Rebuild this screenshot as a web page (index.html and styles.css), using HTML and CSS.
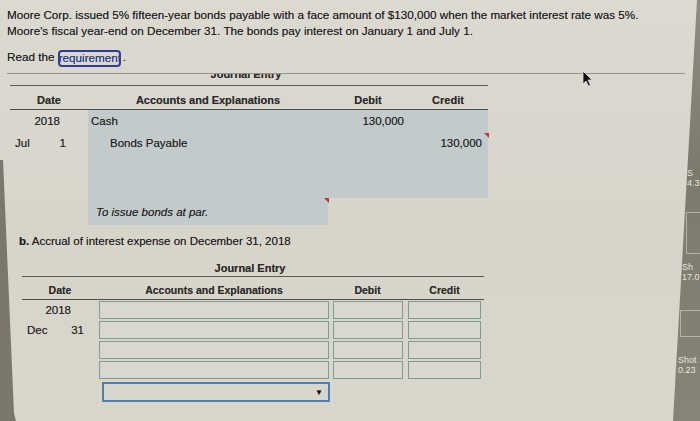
FILE: index.html
```html
<!DOCTYPE html>
<html>
<head>
<meta charset="utf-8">
<link rel="stylesheet" href="styles.css">
</head>
<body>
<div class="page">
  <p class="q">Moore Corp. issued 5% fifteen-year bonds payable with a face amount of $130,000 when the market interest rate was 5%.<br>Moore's fiscal year-end on December 31. The bonds pay interest on January 1 and July 1.</p>
  <p class="read">Read the <span class="req">requirements</span>.</p>
  <div class="rule"></div>

  <section class="je je-a">
    <div class="title-clip"><div class="title">Journal Entry</div></div>
    <div class="row head">
      <div>Date</div><div>Accounts and Explanations</div><div>Debit</div><div>Credit</div>
    </div>
    <div class="row">
      <div class="date"><span></span><span class="year">2018</span></div>
      <div class="acct shade">Cash</div>
      <div class="num shade">130,000</div>
      <div class="num shade"></div>
    </div>
    <div class="row">
      <div class="date"><span>Jul</span><span class="day">1</span></div>
      <div class="acct cr shade">Bonds Payable</div>
      <div class="num shade"></div>
      <div class="num shade mark">130,000</div>
    </div>
    <div class="row">
      <div class="date"></div>
      <div class="shade"></div><div class="shade"></div><div class="shade"></div>
    </div>
    <div class="row">
      <div class="date"></div>
      <div class="shade"></div><div class="shade"></div><div class="shade"></div>
    </div>
    <div class="row expl">
      <div class="date"></div>
      <div class="acct shade mark"><em>To issue bonds at par.</em></div>
      <div></div><div></div>
    </div>
  </section>

  <p class="part"><b>b.</b> Accrual of interest expense on December 31, 2018</p>

  <section class="je je-b">
    <div class="title">Journal Entry</div>
    <div class="row head">
      <div>Date</div><div>Accounts and Explanations</div><div>Debit</div><div>Credit</div>
    </div>
    <div class="row">
      <div class="date"><span></span><span class="year">2018</span></div>
      <div class="cell"><span class="input"></span></div>
      <div class="cell"><span class="input"></span></div>
      <div class="cell"><span class="input"></span></div>
    </div>
    <div class="row">
      <div class="date"><span>Dec</span><span class="day">31</span></div>
      <div class="cell"><span class="input"></span></div>
      <div class="cell"><span class="input"></span></div>
      <div class="cell"><span class="input"></span></div>
    </div>
    <div class="row">
      <div class="date"></div>
      <div class="cell"><span class="input"></span></div>
      <div class="cell"><span class="input"></span></div>
      <div class="cell"><span class="input"></span></div>
    </div>
    <div class="row">
      <div class="date"></div>
      <div class="cell"><span class="input"></span></div>
      <div class="cell"><span class="input"></span></div>
      <div class="cell"><span class="input"></span></div>
    </div>
    <div class="row last">
      <div class="date"></div>
      <div class="cell"><span class="select">&#9660;</span></div>
      <div></div><div></div>
    </div>
  </section>
</div>

<div class="edge-right">
  <span class="lbl l1">S<br>4.3</span>
  <span class="box b1"></span>
  <span class="lbl l2">Sh<br>17.0</span>
  <span class="box b2"></span>
  <span class="lbl l3">Shot<br>0.23</span>
</div>
<div class="edge-left"></div>
<svg class="cursor" width="11" height="17" viewBox="0 0 11 17"><path d="M1 1 L1 14 L4 11 L6.5 16 L8.5 15 L6 10 L10 10 Z" fill="#111" stroke="#ddd" stroke-width="0.8"/></svg>
</body>
</html>
```

FILE: styles.css
```css
html, body {
  margin: 0;
  padding: 0;
}
body {
  width: 700px;
  height: 421px;
  overflow: hidden;
  position: relative;
  font-family: "Liberation Sans", Arial, sans-serif;
  color: #222;
  text-shadow: 0 0 0.6px rgba(0, 0, 0, 0.45);
  background: linear-gradient(180deg, #dcd9d1 0%, #d7d4ca 55%, #d9d6cc 100%);
}
.page {
  padding: 7px 0 0 7px;
}
.q {
  margin: 0;
  font-size: 11.7px;
  line-height: 16px;
  color: #1a1a1a;
}
.read {
  margin: 10px 0 0 0;
  font-size: 11.7px;
  line-height: 16px;
  color: #1a1a1a;
}
.req {
  display: inline-block;
  vertical-align: top;
  width: 58px;
  height: 13px;
  margin-top: 1px;
  margin-right: 2px;
  line-height: 12px;
  overflow: hidden;
  border: 2px solid #2f3f95;
  border-radius: 4px;
  padding: 0 0 0 1px;
  color: #26388f;
  white-space: nowrap;
  text-indent: -2px;
}
.rule {
  margin-top: 6px;
  width: 678px;
  height: 1px;
  background: #97948c;
}

.je {
  font-size: 11.5px;
}
.row {
  display: grid;
  align-items: center;
}
.row > div {
  height: 100%;
  display: flex;
  align-items: center;
}
.head > div {
  justify-content: center;
  font-weight: bold;
  font-size: 11px;
  color: #2b2b2b;
}

/* table A */
.je-a {
  margin-left: 3px;
  width: 478px;
}
.je-a .row {
  grid-template-columns: 78px 240px 80px 80px;
  height: 22px;
}
.title-clip {
  height: 11px;
  overflow: hidden;
  border-bottom: 1px solid #5d5b56;
}
.je-a .title {
  margin-top: -7px;
  text-align: center;
  padding-right: 6px;
  font-weight: bold;
  font-size: 11px;
  line-height: 14px;
  color: #2b2b2b;
}
.je-a .head {
  height: 24px;
  box-sizing: border-box;
  padding-top: 5px;
  border-bottom: 1px solid #4f4d49;
}
.shade {
  background: #c3cacb;
}
.acct {
  padding-left: 3px;
}
.acct.cr {
  padding-left: 22px;
}
.num {
  justify-content: flex-end;
  padding-right: 4px;
}
.date {
  justify-content: space-between;
}
.je-a .date {
  padding: 0 22px 0 5px;
}
.je-a .date .year {
  margin-right: 6px;
}
.je-a .expl {
  height: 25px;
}
.je-a .expl .acct {
  padding-left: 8px;
  padding-top: 3px;
}
.mark {
  position: relative;
}
.mark::after {
  content: "";
  position: absolute;
  top: 1px;
  right: -1px;
  border-top: 5px solid #c8323e;
  border-left: 5px solid transparent;
}
.je-a .row:nth-child(4) .mark {
  padding-right: 6px;
}

.part {
  margin: 10px 0 0 12px;
  font-size: 11.5px;
  line-height: 16px;
  color: #1a1a1a;
}

/* table B */
.je-b {
  margin: 11px 0 0 15px;
  width: 462px;
}
.je-b .title {
  height: 16px;
  line-height: 16px;
  text-align: center;
  padding-right: 6px;
  font-weight: bold;
  font-size: 11px;
  color: #2b2b2b;
  border-bottom: 1px solid #5d5b56;
}
.je-b .row {
  grid-template-columns: 76px 232px 75px 79px;
  height: 20px;
}
.je-b .head {
  height: 23px;
  box-sizing: border-box;
  padding-top: 4px;
  border-bottom: 1px solid #4f4d49;
}
.je-b .head > div {
  font-size: 10.5px;
}
.je-b .date {
  padding: 0 14px 0 5px;
}
.je-b .date .year {
  margin-right: 13px;
}
.cell {
  padding: 0 2px 0 3px;
}
.je-b .row > .cell:nth-child(2) {
  padding: 0 1px 0 1px;
}
.je-b .row > .cell:nth-child(4) {
  padding: 0 3px 0 3px;
}
.input {
  display: block;
  width: 100%;
  height: 18px;
  box-sizing: border-box;
  border: 1px solid #7f9c97;
  background: #d9d8cf;
}
.je-b .last {
  height: 23px;
}
.je-b .last > .cell:nth-child(2) {
  padding: 1px 0 0 4px;
}
.select {
  display: flex;
  align-items: center;
  justify-content: flex-end;
  width: 100%;
  height: 20px;
  box-sizing: border-box;
  border: 2px solid #4f80b1;
  background: #d8d7ce;
  padding-right: 5px;
  font-size: 8px;
  color: #111;
}

/* photo surroundings */
.edge-right {
  position: absolute;
  top: 0;
  right: 0;
  width: 28px;
  height: 421px;
  background: linear-gradient(180deg, #8f8d80 0%, #7b7a6c 40%, #858476 100%);
  clip-path: polygon(25px 0, 28px 0, 28px 421px, 1px 421px);
  color: #e8e6dc;
  font-size: 9px;
  line-height: 10px;
  text-shadow: none;
}
.lbl {
  position: absolute;
}
.l1 { top: 168px; left: 15px; }
.l2 { top: 262px; left: 10px; }
.l3 { top: 355px; left: 6px; }
.box {
  position: absolute;
  border: 1px solid #b3b2a6;
}
.b1 { top: 212px; left: 14px; width: 14px; height: 40px; }
.b2 { top: 310px; left: 8px; width: 20px; height: 25px; }
.edge-left {
  position: absolute;
  left: 0;
  top: 160px;
  width: 16px;
  height: 261px;
  background: #7b776d;
  clip-path: polygon(0 0, 3px 0, 14px 253px, 16px 261px, 0 261px);
}
.cursor {
  position: absolute;
  left: 582px;
  top: 70px;
}
```
